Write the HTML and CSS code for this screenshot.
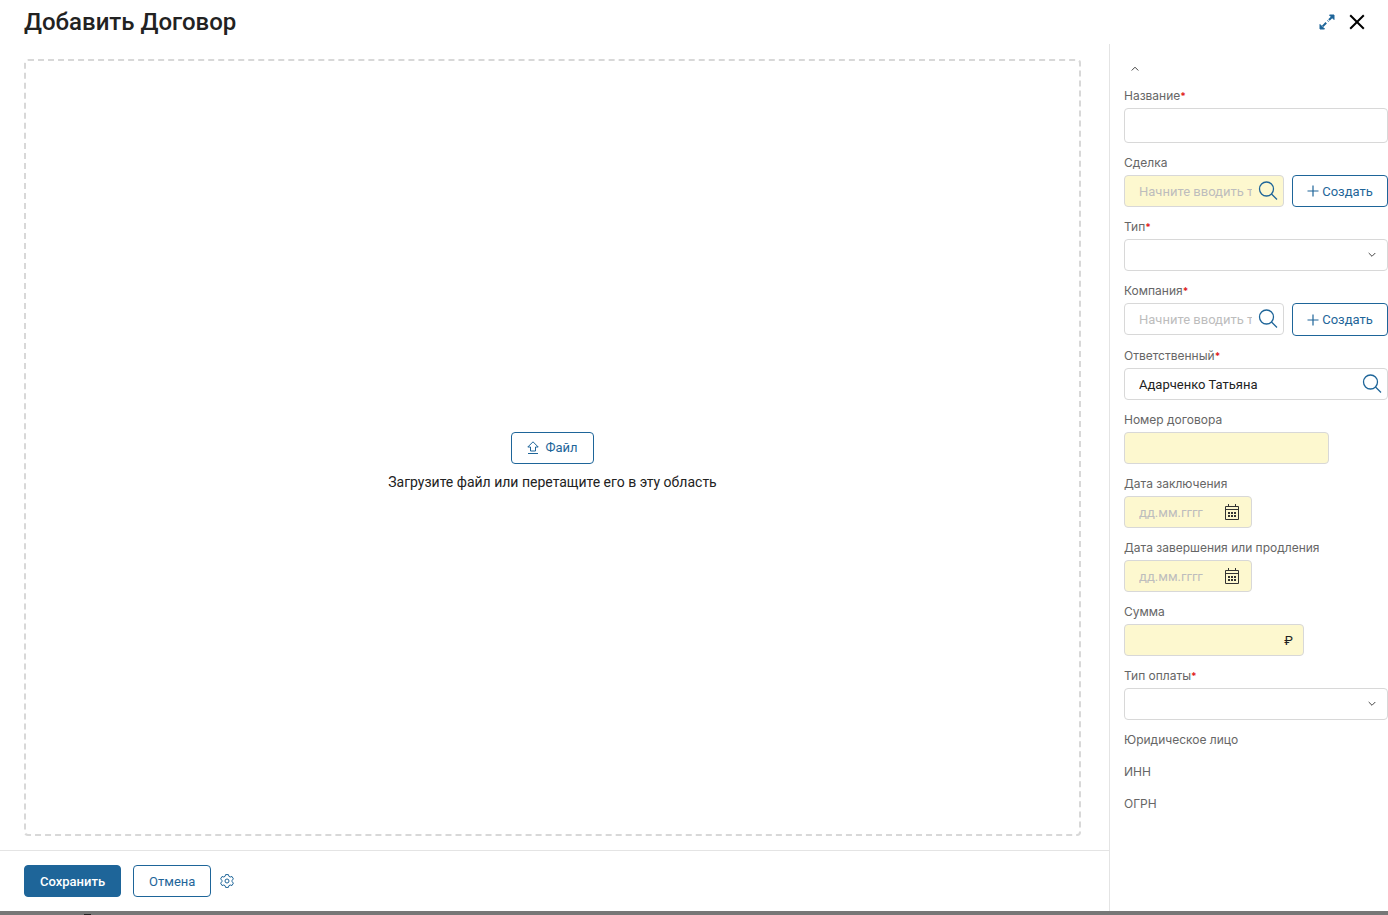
FILE: index.html
```html
<!DOCTYPE html>
<html lang="ru">
<head>
<meta charset="utf-8">
<title>Добавить Договор</title>
<link rel="stylesheet" href="styles.css">
</head>
<body>
<svg class="sprite" aria-hidden="true">
  <symbol id="search" viewBox="0 0 20 20"><circle cx="8.500" cy="8" r="7"/><path d="M13.500 13 19 18.500"/></symbol>
  <symbol id="plus" viewBox="0 0 12 12"><path d="M6 .5v11M.5 6h11"/></symbol>
  <symbol id="down" viewBox="0 0 8 6"><path d="M.7 1 4 4.300 7.300 1"/></symbol>
  <symbol id="calendar" viewBox="0 0 16 16"><path d="M1.500 2.500h13v13h-13zM1.500 5.500h13M4.500 0v2.500M11.500 0v2.500"/><path class="dots" d="M4 8h2v2H4zM7 8h2v2H7zM10 8h2v2h-2zM4 11h2v2H4zM7 11h2v2H7zM10 11h2v2h-2z"/></symbol>
</svg>
<div class="dialog">
  <header class="header">
    <h1 class="title">Добавить Договор</h1>
    <button class="icon-button" type="button" aria-label="Развернуть">
      <svg class="icon-expand" viewBox="0 0 16 16"><path class="heads" d="M10.500 1H15v4.500zM1 10.500V15h4.500z"/><path class="shaft" d="M13.500 2.500 8.800 7.200M7.200 8.800l-4.700 4.700"/></svg>
    </button>
    <button class="icon-button" type="button" aria-label="Закрыть">
      <svg class="icon-close" viewBox="0 0 16 16"><path d="M1.200 1.200l13.600 13.600M14.800 1.200 1.200 14.800"/></svg>
    </button>
  </header>
  <form class="content">
    <main class="main">
      <section class="dropzone">
        <button class="button" type="button">
          <svg class="icon-upload" viewBox="0 0 12 13"><path d="M6 .8 11.200 6H8.500v4h-5V6H.8zM1 12.500h10"/></svg>
          Файл
        </button>
        <p class="hint">Загрузите файл или перетащите его в эту область</p>
      </section>
      <footer class="footer">
        <button class="button primary" type="submit">Сохранить</button>
        <button class="button" type="button">Отмена</button>
        <button class="icon-button settings" type="button" aria-label="Настройки">
          <svg class="icon-gear" viewBox="0 0 14 14"><path d="M5.600.6h2.800l.5 1.700 1.300.7 1.800-.5 1.400 2.400L12.100 6.300v1.400l1.300 1.400-1.400 2.400-1.800-.5-1.300.7-.5 1.700H5.600l-.5-1.700-1.300-.7-1.800.5L.6 9.100l1.300-1.400V6.300L.6 4.900 2 2.500l1.800.5 1.300-.7z"/><circle cx="7" cy="7" r="2"/></svg>
        </button>
      </footer>
    </main>
    <aside class="sidebar">
      <button class="icon-button collapse" type="button" aria-label="Свернуть">
        <svg class="icon-up" viewBox="0 0 8 6"><path d="M.7 4.500 4 1.200l3.300 3.300"/></svg>
      </button>
      <div class="field">
        <label class="label" for="name">Название<span class="required">*</span></label>
        <div class="control tall"><input class="input" id="name" type="text"></div>
      </div>
      <div class="field">
        <label class="label" for="deal">Сделка</label>
        <div class="row">
          <div class="control lookup filled">
            <input class="input" id="deal" type="text" placeholder="Начните вводить текст">
            <svg class="icon-search"><use href="#search"/></svg>
          </div>
          <button class="button create" type="button"><svg class="icon-plus"><use href="#plus"/></svg>Создать</button>
        </div>
      </div>
      <div class="field">
        <label class="label" for="type">Тип<span class="required">*</span></label>
        <div class="control"><select class="input" id="type"><option></option></select><svg class="icon-down"><use href="#down"/></svg></div>
      </div>
      <div class="field">
        <label class="label" for="company">Компания<span class="required">*</span></label>
        <div class="row">
          <div class="control lookup">
            <input class="input" id="company" type="text" placeholder="Начните вводить текст">
            <svg class="icon-search"><use href="#search"/></svg>
          </div>
          <button class="button create required-create" type="button"><svg class="icon-plus"><use href="#plus"/></svg>Создать</button>
        </div>
      </div>
      <div class="field">
        <label class="label" for="owner">Ответственный<span class="required">*</span></label>
        <div class="control lookup"><input class="input" id="owner" type="text" value="Адарченко Татьяна"><svg class="icon-search"><use href="#search"/></svg></div>
      </div>
      <div class="field">
        <label class="label" for="number">Номер договора</label>
        <div class="control filled number"><input class="input" id="number" type="text"></div>
      </div>
      <div class="field">
        <label class="label" for="start">Дата заключения</label>
        <div class="control filled date"><input class="input" id="start" type="text" placeholder="дд.мм.гггг"><svg class="icon-calendar"><use href="#calendar"/></svg></div>
      </div>
      <div class="field">
        <label class="label" for="end">Дата завершения или продления</label>
        <div class="control filled date"><input class="input" id="end" type="text" placeholder="дд.мм.гггг"><svg class="icon-calendar"><use href="#calendar"/></svg></div>
      </div>
      <div class="field">
        <label class="label" for="sum">Сумма</label>
        <div class="control filled sum"><input class="input" id="sum" type="text"><span>₽</span></div>
      </div>
      <div class="field">
        <label class="label" for="payment">Тип оплаты<span class="required">*</span></label>
        <div class="control"><select class="input" id="payment"><option></option></select><svg class="icon-down"><use href="#down"/></svg></div>
      </div>
      <div class="label">Юридическое лицо</div>
      <div class="label">ИНН</div>
      <div class="label">ОГРН</div>
    </aside>
  </form>
</div>
<div class="backdrop"><span class="backdrop-mark"></span></div>
</body>
</html>
```

FILE: styles.css
```css
* { box-sizing: border-box; }

body {
  margin: 0;
  min-height: 100vh;
  display: flex;
  flex-direction: column;
  background: #fff;
  color: #222;
  font-family: Roboto, "Liberation Sans", sans-serif;
  font-size: 13px;
}

button, input, select { font: inherit; color: inherit; }
svg { flex: none; fill: none; stroke: #1e6599; }
.sprite { position: absolute; width: 0; height: 0; }

.dialog { flex: 1; display: flex; flex-direction: column; }

.header {
  height: 44px;
  padding: 0 23px 0 24px;
  display: flex;
  align-items: center;
  gap: 14px;
}
.title { flex: 1; margin: 0; font-size: 24px; font-weight: 500; line-height: 28px; }

.icon-button {
  display: flex;
  align-items: center;
  justify-content: center;
  padding: 0;
  border: 0;
  background: none;
}
.icon-expand { width: 16px; height: 16px; }
.icon-expand .heads { fill: #1e6599; }
.icon-expand .shaft { stroke-width: 2; stroke-dasharray: 5 1; }
.icon-close { width: 16px; height: 16px; stroke: #000; stroke-width: 2; }

.content { flex: 1; display: grid; grid-template-columns: 1fr 279px; }
.main { display: flex; flex-direction: column; }

.dropzone {
  flex: 1;
  margin: 15px 28px 14px 24px;
  border: 2px dashed #d8d8d8;
  border-radius: 4px;
  display: flex;
  flex-direction: column;
  align-items: center;
  justify-content: center;
  gap: 8px;
  padding-top: 28px;
}
.hint { margin: 0; padding: 0; font-size: 14px; line-height: 20px; }

.button {
  height: 32px;
  padding: 0 15px;
  display: flex;
  align-items: center;
  justify-content: center;
  border: 1px solid #1e6599;
  border-radius: 4px;
  background: #fff;
  color: #1e6599;
  white-space: nowrap;
}
.primary { background: #1e6599; color: #fff; font-weight: 500; }
.icon-upload { width: 12px; height: 13px; margin-right: 6px; stroke-width: 1; }

.footer {
  padding: 14px 24px;
  display: flex;
  align-items: center;
  gap: 12px;
  border-top: 1px solid #e4e4e4;
}
.settings { margin-left: -3px; }
.icon-gear { width: 14px; height: 14px; stroke-width: 1; }

.sidebar {
  padding: 13px 0 0 14px;
  border-left: 1px solid #e4e4e4;
  display: flex;
  flex-direction: column;
  gap: 6px;
}
.collapse { width: 22px; height: 19px; padding-top: 4px; }
.icon-up { width: 8px; height: 6px; stroke: #444; }

.label {
  display: block;
  padding-top: 2px;
  font-family: Inter, "Liberation Sans", sans-serif;
  font-size: 12px;
  line-height: 24px;
  color: #666;
}
.required { color: #e0231c; font-weight: 700; font-size: 10px; line-height: 1; }
.row { display: flex; gap: 8px; align-items: flex-start; }
.control {
  height: 32px;
  flex: 1;
  display: flex;
  align-items: center;
  border: 1px solid #d8d8d8;
  border-radius: 4px;
  background: #fff;
  padding: 0 15px 0 14px;
  position: relative;
}
.tall { height: 35px; }
.filled { background: #fdf8cf; }
.lookup { padding-right: 5px; gap: 6px; }
.number { width: 205px; }
.date { width: 128px; padding-right: 11px; }
.sum { width: 180px; padding-right: 10px; }
.input {
  flex: 1;
  min-width: 0;
  width: 100%;
  height: 100%;
  padding: 0;
  border: 0;
  outline: 0;
  background: none;
  appearance: none;
}
.input::placeholder { color: #bdbdbd; opacity: 1; }
.create { width: 96px; padding: 0; gap: 3px; }
.required-create { height: 33px; }
.icon-search { width: 20px; height: 20px; stroke-width: 1.3; }
.icon-plus { width: 12px; height: 12px; stroke-width: 1.2; }
.icon-down { width: 8px; height: 6px; stroke: #444; position: absolute; right: 11px; }
.icon-calendar { width: 16px; height: 16px; stroke: #333; }
#calendar .dots { fill: #333; stroke: none; }

.backdrop { height: 4px; padding-left: 84px; display: flex; align-items: flex-end; background: #777; }
.backdrop-mark { width: 7px; height: 1px; background: #222; }
```
